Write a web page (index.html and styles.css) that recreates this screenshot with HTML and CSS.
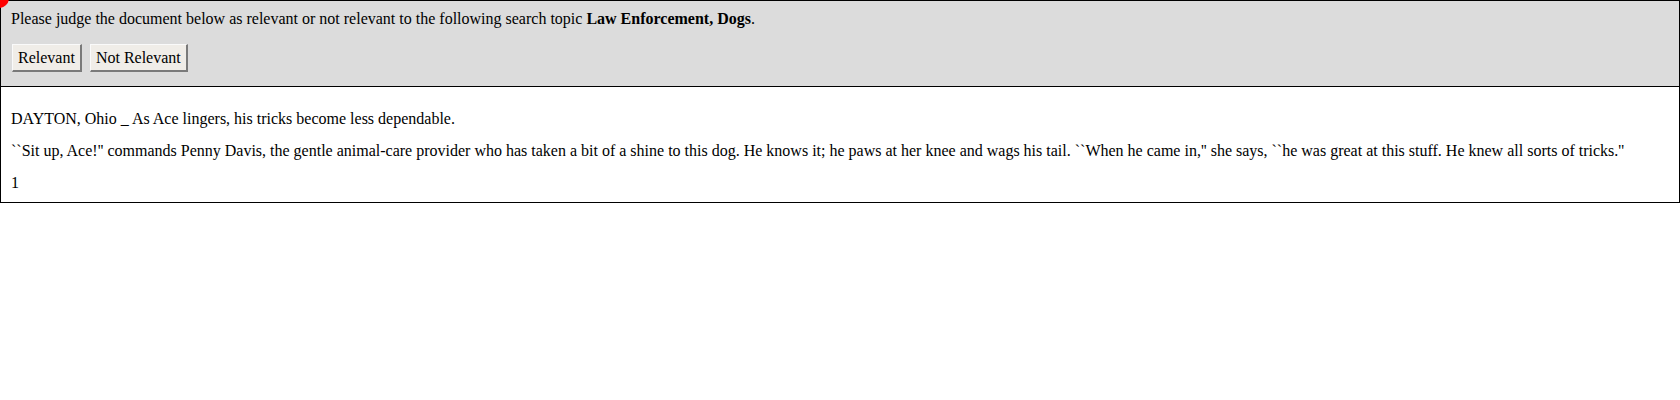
FILE: index.html
```html
<!DOCTYPE html>
<html>
<head>
<meta charset="utf-8">
<link rel="stylesheet" href="styles.css">
</head>
<body>
<div class="dot"></div>
<div class="frame">
  <div class="judge">
    <div class="prompt">Please judge the document below as relevant or not relevant to the following search topic <b>Law Enforcement, Dogs</b>.</div>
    <div class="actions">
      <button class="btn">Relevant</button>
      <button class="btn">Not Relevant</button>
    </div>
  </div>
  <div class="doc">
    <p>DAYTON, Ohio _ As Ace lingers, his tricks become less dependable.</p>
    <p>``Sit up, Ace!'' commands Penny Davis, the gentle animal-care provider who has taken a bit of a shine to this dog. He knows it; he paws at her knee and wags his tail. ``When he came in,'' she says, ``he was great at this stuff. He knew all sorts of tricks.''</p>
    <p class="last">1</p>
  </div>
</div>
</body>
</html>
```
FILE: styles.css
```css
html, body {
  margin: 0;
  padding: 0;
  background: #fff;
}
body {
  font-family: "Liberation Serif", "Times New Roman", serif;
  font-size: 16px;
  line-height: 18px;
  color: #000;
  position: relative;
}
.dot {
  position: absolute;
  left: -11px;
  top: -12px;
  width: 20px;
  height: 20px;
  border-radius: 50%;
  background: #f00;
  z-index: 2;
}
.frame {
  border: 1px solid #000;
}
.judge {
  background: #dcdcdc;
  border-bottom: 1px solid #000;
  padding: 9px 10px 14px;
}
.prompt {
  height: 18px;
}
.actions {
  display: flex;
  gap: 8px;
  margin-top: 16px;
  padding-left: 1px;
}
.btn {
  font-family: "Liberation Serif", "Times New Roman", serif;
  font-size: 16px;
  line-height: 18px;
  height: 28px;
  padding: 0 5px;
  margin: 0;
  color: #000;
  background: #f0ede8;
  border: 1px solid;
  border-color: #fafafa #7a7a7a #7a7a7a #fafafa;
  border-width: 1px 2px 2px 1px;
}
.doc {
  padding: 23px 10px 10px;
}
.doc p {
  margin: 0 0 14px;
}
.doc p.last {
  margin: 0;
}
```
